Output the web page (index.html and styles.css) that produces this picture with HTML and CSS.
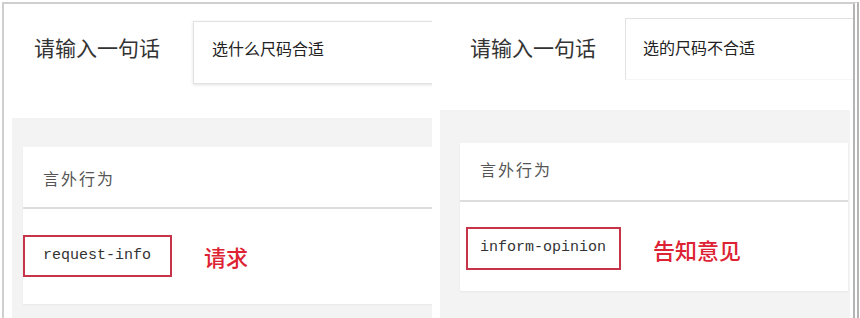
FILE: index.html
```html
<!DOCTYPE html>
<html lang="zh-CN">
<head>
  <meta charset="UTF-8">
  <meta name="viewport" content="width=device-width, initial-scale=1.0">
  <title>言外行为</title>
  <link rel="stylesheet" href="styles.css">
</head>
<body>
  <div class="window">
    <div class="panel left">
      <div class="ask-row">
        <div class="ask-label">请输入一句话</div>
        <div class="ask-input">选什么尺码合适</div>
      </div>
      <div class="result">
        <div class="card">
          <div class="card-head">言外行为</div>
          <div class="card-body">
            <span class="act-code">request-info</span>
            <span class="act-name">请求</span>
          </div>
        </div>
      </div>
    </div>

    <div class="panel right">
      <div class="ask-row">
        <div class="ask-label">请输入一句话</div>
        <div class="ask-input">选的尺码不合适</div>
      </div>
      <div class="result">
        <div class="card">
          <div class="card-head">言外行为</div>
          <div class="card-body">
            <span class="act-code">inform-opinion</span>
            <span class="act-name">告知意见</span>
          </div>
        </div>
      </div>
    </div>
  </div>
</body>
</html>
```

FILE: styles.css
```css
body {
  margin: 0;
  background: #fff;
  font-family: "Noto Sans CJK SC", "Noto Sans", sans-serif;
  color: #333;
}

.window {
  display: flex;
  width: 849px;
  height: 314px;
  margin: 2px 0 0 2px;
  border-top: 2px solid #cfcfcf;
  border-left: 2px solid #cfcfcf;
  border-right: 6px double #b4b4b4;
  overflow: hidden;
}

.panel {
  display: flex;
  flex-direction: column;
  overflow: hidden;
}

.panel.left {
  width: 428px;
}

.panel.right {
  width: 421px;
}

/* top row: label + text box */
.ask-row {
  display: flex;
  align-items: flex-start;
  flex-shrink: 0;
}

.ask-label {
  flex-shrink: 0;
  font-size: 21px;
  line-height: 30px;
  color: #333;
}

.ask-input {
  flex-shrink: 0;
  box-sizing: border-box;
  width: 300px;
  font-size: 16px;
  line-height: 22px;
  color: #222;
  background: #fff;
  border: 1px solid #e2e2e2;
  box-shadow: 0 1px 3px rgba(0, 0, 0, 0.12);
}

.left .ask-row {
  height: 114px;
  padding: 17px 0 0 30px;
  box-sizing: border-box;
}

.left .ask-label {
  width: 159px;
  margin-top: 11px;
}

.left .ask-input {
  height: 63px;
  padding: 15px 18px;
}

.right .ask-row {
  height: 106px;
  padding: 14px 0 0 38px;
  box-sizing: border-box;
}

.right .ask-label {
  width: 155px;
  margin-top: 14px;
}

.right .ask-input {
  width: 260px;
  height: 62px;
  padding: 17px 17px;
  border-bottom-color: #f6f6f6;
  box-shadow: none;
}

/* grey result area */
.result {
  flex: 1;
  background: #f3f3f3;
  margin-left: 8px;
}

.left .result {
  padding: 29px 0 0 11px;
}

.right .result {
  padding: 33px 2px 0 20px;
  margin-right: 3px;
}

.card {
  background: #fff;
  box-shadow: 0 1px 2px rgba(0, 0, 0, 0.05);
}

.card-head {
  font-size: 16px;
  letter-spacing: 2px;
  color: #555;
  border-bottom: 2px solid #dddddd;
}

.left .card-head {
  height: 60px;
  padding: 0 0 0 20px;
  line-height: 62px;
}

.right .card-head {
  height: 57px;
  padding: 0 0 0 20px;
  line-height: 52px;
}

.card-body {
  display: flex;
  align-items: center;
}

.left .card-body {
  padding: 26px 0 27px 0;
}

.right .card-body {
  padding: 25px 0 21px 6px;
}

.act-code {
  box-sizing: border-box;
  height: 42px;
  padding: 0 18px;
  font-family: "Liberation Mono", monospace;
  font-size: 15px;
  line-height: 38px;
  color: #333;
  border: 2px solid #c7344a;
}

.left .act-code {
  width: 149px;
}

.right .act-code {
  width: 155px;
  height: 43px;
  padding: 0 12px;
}

.act-name {
  margin-left: 32px;
  font-size: 22px;
  font-weight: 500;
  color: #dd2233;
}
```
